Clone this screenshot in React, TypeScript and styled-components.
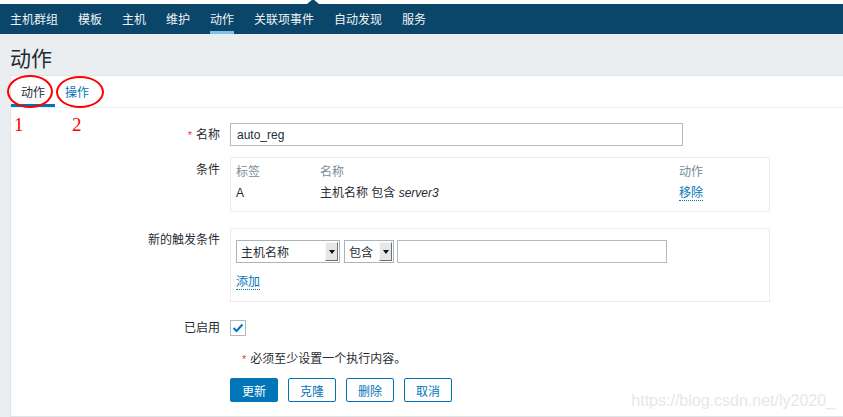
import * as React from 'react';
import styled, { createGlobalStyle } from 'styled-components';

const GlobalStyle = createGlobalStyle`
  html, body {
    margin: 0;
    padding: 0;
    background: #ebeef0;
    font-family: "Liberation Sans", Arial, "Noto Sans CJK SC", sans-serif;
    font-size: 12px;
    color: #1f2c33;
  }
  * { box-sizing: border-box; }
`;

const Page = styled.div`
  width: 843px;
  height: 417px;
  padding-top: 4px;
  background: #ebeef0;
  border-top: 0;
  position: relative;
  overflow: hidden;
  &::before {
    content: '';
    position: absolute;
    left: 0;
    top: 0;
    right: 0;
    height: 4px;
    background: #ffffff;
  }
`;

const Nav = styled.nav`
  position: relative;
  height: 30px;
  background: #0a466a;
  display: flex;
  padding-left: 0;
  &::before {
    content: '';
    position: absolute;
    left: 307px;
    top: -5px;
    border-left: 6px solid transparent;
    border-right: 6px solid transparent;
    border-bottom: 5px solid #0a466a;
  }
`;

const NavItem = styled.div<{ $active?: boolean }>`
  padding: 0 10px;
  height: 30px;
  display: flex;
  align-items: center;
  color: #f0f3f5;
  font-size: 12px;
  white-space: nowrap;
  span {
    display: flex;
    align-items: center;
    height: 100%;
    padding-top: 2px;
    border-bottom: 3px solid ${(p) => (p.$active ? '#7cc3ee' : 'transparent')};
  }
`;

const Header = styled.div`
  height: 41px;
  padding: 5px 10px 0;
  display: flex;
  align-items: center;
`;

const Title = styled.h1`
  margin: 0;
  font-size: 21px;
  font-weight: 400;
  color: #1f2c33;
`;

const Panel = styled.div`
  position: relative;
  margin-left: 10px;
  height: 342px;
  background: #ffffff;
  border: 1px solid #dfe4e7;
  border-right: 0;
`;

const Tabs = styled.div`
  display: flex;
  height: 32px;
  border-bottom: 1px solid #ebeef0;
`;

const Tab = styled.div<{ $active?: boolean }>`
  padding: 2px 10px 0;
  display: flex;
  align-items: center;
  color: ${(p) => (p.$active ? '#1f2c33' : '#0275b8')};
  border-bottom: 3px solid ${(p) => (p.$active ? '#0275b8' : 'transparent')};
`;

const Form = styled.div`
  padding-top: 15px;
  display: flex;
  flex-direction: column;
`;

const Row = styled.div<{ $mt?: number; $center?: boolean }>`
  display: flex;
  align-items: ${(p) => (p.$center ? 'center' : 'flex-start')};
  margin-top: ${(p) => p.$mt || 0}px;
`;

const Label = styled.div<{ $pt?: number }>`
  width: 209px;
  margin-right: 10px;
  text-align: right;
  line-height: 14px;
  padding-top: ${(p) => (p.$pt === undefined ? 5 : p.$pt)}px;
  white-space: nowrap;
`;

const Req = styled.span`
  color: #e33734;
  margin-right: 4px;
  font-size: 11px;
`;

const TextInput = styled.div<{ $w: number }>`
  width: ${(p) => p.$w}px;
  height: 23px;
  border: 1px solid #acbbc4;
  padding: 0 6px;
  display: flex;
  align-items: center;
  background: #fff;
`;

const Box = styled.div<{ $pad: string }>`
  width: 540px;
  border: 1px solid #ebebeb;
  padding: ${(p) => p.$pad};
`;

const Grid = styled.div`
  display: grid;
  grid-template-columns: 84px 359px 1fr;
  line-height: 21px;
`;

const Th = styled.div`
  color: #768d99;
`;

const Italic = styled.span`
  font-style: italic;
`;

const Link = styled.span`
  color: #0275b8;
  border-bottom: 1px dotted #0275b8;
  line-height: 14px;
  display: inline-block;
`;

const Controls = styled.div`
  display: flex;
  align-items: center;
`;

const Select = styled.div<{ $w: number; $mr: number }>`
  width: ${(p) => p.$w}px;
  height: 23px;
  margin-right: ${(p) => p.$mr}px;
  border: 1px solid #a9b5bd;
  display: flex;
  align-items: stretch;
  background: #fff;
`;

const SelectText = styled.div`
  flex: 1;
  padding-left: 4px;
  display: flex;
  align-items: center;
`;

const SelectArrow = styled.div`
  width: 13px;
  margin: 1px;
  background: #e6e6e6;
  border-top: 1px solid #f8f8f8;
  border-left: 1px solid #f8f8f8;
  border-right: 1px solid #6f6f6f;
  border-bottom: 1px solid #6f6f6f;
  display: flex;
  align-items: center;
  justify-content: center;
  &::after {
    content: '';
    border-left: 3px solid transparent;
    border-right: 3px solid transparent;
    border-top: 4px solid #111;
  }
`;

const Check = styled.div`
  width: 16px;
  height: 16px;
  border: 1px solid #acbbc4;
  display: flex;
  align-items: center;
  justify-content: center;
`;

const Note = styled.div`
  margin-left: 230px;
  margin-top: 16px;
  line-height: 14px;
  padding-left: 1px;
`;

const Buttons = styled.div`
  margin-left: 219px;
  margin-top: 12px;
  display: flex;
  gap: 10px;
`;

const Button = styled.div<{ $primary?: boolean }>`
  width: 48px;
  height: 24px;
  border: 1px solid #0275b8;
  border-radius: 2px;
  background: ${(p) => (p.$primary ? '#0275b8' : '#ffffff')};
  color: ${(p) => (p.$primary ? '#ffffff' : '#0275b8')};
  display: flex;
  align-items: center;
  justify-content: center;
`;

const Watermark = styled.div`
  position: absolute;
  right: 8px;
  bottom: 6px;
  font-size: 16px;
  color: #e6e8ea;
  font-family: "Liberation Sans", Arial, sans-serif;
`;

const Ellipse = styled.div<{ $l: number; $t: number; $w: number; $h: number }>`
  position: absolute;
  left: ${(p) => p.$l}px;
  top: ${(p) => p.$t}px;
  width: ${(p) => p.$w}px;
  height: ${(p) => p.$h}px;
  border: 2px solid #ff0000;
  border-radius: 50%;
`;

const Mark = styled.div<{ $l: number }>`
  position: absolute;
  left: ${(p) => p.$l}px;
  top: 39px;
  color: #ff0000;
  font-family: "Liberation Serif", "Times New Roman", serif;
  font-size: 19px;
  line-height: 19px;
`;

const navItems = ['主机群组', '模板', '主机', '维护', '动作', '关联项事件', '自动发现', '服务'];

export default function App() {
  return (
    <>
      <GlobalStyle />
      <Page>
        <Nav>
          {navItems.map((n) => (
            <NavItem key={n} $active={n === '动作'}>
              <span>{n}</span>
            </NavItem>
          ))}
        </Nav>
        <Header>
          <Title>动作</Title>
        </Header>
        <Panel>
          <Tabs>
            <Tab $active>动作</Tab>
            <Tab>操作</Tab>
          </Tabs>
          <Form>
            <Row>
              <Label>
                <Req>*</Req>名称
              </Label>
              <TextInput $w={453}>auto_reg</TextInput>
            </Row>
            <Row $mt={11}>
              <Label $pt={6}>条件</Label>
              <Box $pad="4px 5px 7px">
                <Grid>
                  <Th>标签</Th>
                  <Th>名称</Th>
                  <Th>动作</Th>
                  <div>A</div>
                  <div>
                    主机名称 包含 <Italic>server3</Italic>
                  </div>
                  <div>
                    <Link>移除</Link>
                  </div>
                </Grid>
              </Box>
            </Row>
            <Row $mt={16}>
              <Label $pt={5}>新的触发条件</Label>
              <Box $pad="11px 5px 11px">
                <Controls>
                  <Select $w={104} $mr={4}>
                    <SelectText>主机名称</SelectText>
                    <SelectArrow />
                  </Select>
                  <Select $w={50} $mr={3}>
                    <SelectText>包含</SelectText>
                    <SelectArrow />
                  </Select>
                  <TextInput $w={270} />
                </Controls>
                <div style={{ marginTop: 12 }}>
                  <Link>添加</Link>
                </div>
              </Box>
            </Row>
            <Row $mt={18} $center>
              <Label $pt={0}>已启用</Label>
              <Check>
                <svg width="12" height="10" viewBox="0 0 12 10">
                  <path d="M1.5 5 L4.5 8 L10.5 1.5" fill="none" stroke="#0275b8" strokeWidth="2" />
                </svg>
              </Check>
            </Row>
            <Note>
              <Req>*</Req>必须至少设置一个执行内容。
            </Note>
            <Buttons>
              <Button $primary>更新</Button>
              <Button>克隆</Button>
              <Button>删除</Button>
              <Button>取消</Button>
            </Buttons>
          </Form>
          <Watermark>https://blog.csdn.net/ly2020_</Watermark>
          <Ellipse $l={-4} $t={-1} $w={46} $h={33} />
          <Ellipse $l={45} $t={0} $w={48} $h={32} />
          <Mark $l={3}>1</Mark>
          <Mark $l={61}>2</Mark>
        </Panel>
      </Page>
    </>
  );
}
